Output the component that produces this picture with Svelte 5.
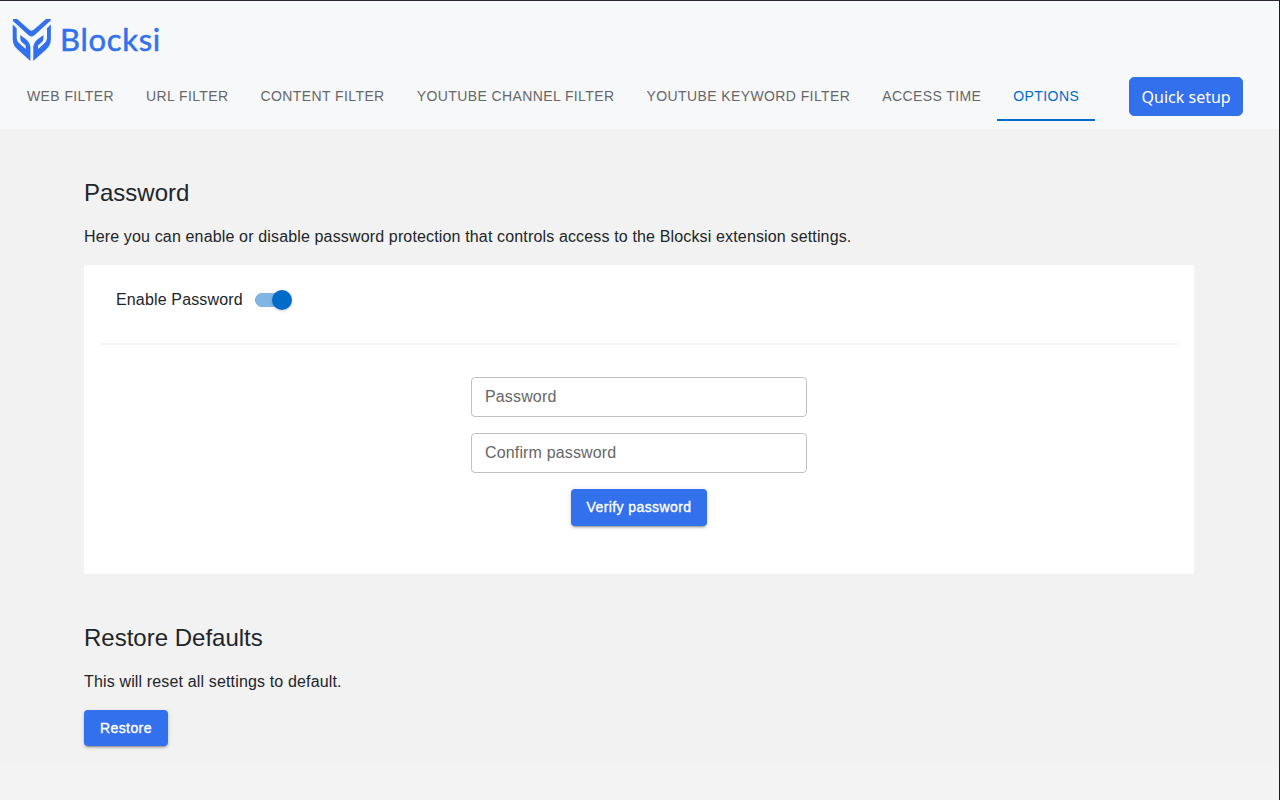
<script>
  const tabs = ['Web filter', 'URL filter', 'Content filter', 'YouTube channel filter', 'YouTube keyword filter', 'Access time', 'Options'];
  let active = $state('Options');
  let enabled = $state(true);
</script>

<div class="page">
  <header>
    <div class="brand">
      <svg class="mark" width="40" height="44" viewBox="0 0 40 44" aria-hidden="true">
        <path d="M0.9 1H5.2L17 11.5Q19.5 13.8 22 11.5L34 1H38.7V2.6L23 16.8Q19.5 20 16 16.8L0.9 3Z" />
        <path d="M0.7 6.5L4.7 10.2V20Q4.8 23 7 25L13.7 31V27.6L10.2 24.6Q8.3 23 8.3 20.5V17L14.3 21.6Q18.4 25 18.4 30V43L5.3 31.3Q0.7 27 0.7 21Z" />
        <path d="M38.9 6.5L35 10.2V20Q34.9 23 32.7 25L26 31V27.6L29.5 24.6Q31.4 23 31.4 20.5V17L25.4 21.6Q21.3 25 21.3 30V43L34.4 31.3Q38.9 27 38.9 21Z" />
      </svg>
      <span class="name">Blocksi</span>
    </div>
    <div class="bar">
      <nav>
        {#each tabs as tab}
          <button class="tab" class:active={tab === active} onclick={() => (active = tab)}>{tab}</button>
        {/each}
      </nav>
      <button class="quick">Quick setup</button>
    </div>
  </header>
  <main>
    <section>
      <h2>Password</h2>
      <p>Here you can enable or disable password protection that controls access to the Blocksi extension settings.</p>
      <div class="card">
        <div class="toggle-row">
          <span>Enable Password</span>
          <button class="switch" class:on={enabled} onclick={() => (enabled = !enabled)} aria-label="Enable Password"><i></i></button>
        </div>
        <hr />
        <form>
          <input type="password" placeholder="Password" />
          <input type="password" placeholder="Confirm password" />
          <button type="button" class="primary verify">Verify password</button>
        </form>
      </div>
    </section>
    <section class="restore">
      <h2>Restore Defaults</h2>
      <p>This will reset all settings to default.</p>
      <button class="primary">Restore</button>
    </section>
  </main>
</div>

<style>
  :global(body) { background: #f3f3f3; }
  .page {
    box-sizing: border-box;
    height: 800px;
    overflow: hidden;
    border-top: 1px solid #2b2630;
    border-right: 1px solid #1c1c1e;
    background: #f3f3f3;
    color: #212529;
    font: 16px/24px "Liberation Sans", Arial, sans-serif;
    letter-spacing: 0.15px;
  }
  button { font-family: inherit; border: 0; cursor: pointer; }
  header { height: 128px; background: #f7f8fa; }
  .brand { display: flex; height: 72px; padding: 17px 0 0 12px; box-sizing: border-box; color: #3370ec; }
  .mark { fill: currentColor; }
  .name { margin-left: 8px; font: 400 31px/43px Lato, sans-serif; letter-spacing: 0.7px; -webkit-text-stroke: 0.5px currentColor; }
  .bar { display: flex; align-items: flex-start; height: 56px; }
  nav { display: flex; padding-left: 11px; }
  .tab {
    height: 48px;
    padding: 0 16px;
    background: none;
    border-bottom: 2px solid transparent;
    color: #666768;
    font-size: 14px;
    letter-spacing: 0.4px;
    text-transform: uppercase;
    white-space: nowrap;
  }
  .tab.active { color: #006bc9; border-color: #006bc9; }
  .quick {
    width: 114px;
    height: 39px;
    margin: 4px 0 0 34px;
    padding: 0;
    border: 1px solid #2f78d8;
    border-radius: 5px;
    background: #3370ec;
    color: #fff;
    font: 16px "Noto Sans", sans-serif;
    white-space: nowrap;
  }
  main { height: 636px; box-sizing: border-box; padding: 48px 85px 0 84px; background: #f2f2f2; }
  h2 { margin: 0; font-size: 24px; line-height: 32px; font-weight: 400; letter-spacing: 0; }
  p { margin: 16px 0; }
  .card { height: 309px; box-sizing: border-box; padding: 19px 16px 0; background: #fff; }
  .toggle-row { display: flex; align-items: center; height: 32px; padding-left: 16px; gap: 12px; }
  .switch {
    width: 37px;
    height: 20px;
    padding: 0;
    background: linear-gradient(#80b5e4, #80b5e4) 7px 3px / 20px 14px no-repeat, radial-gradient(circle at 7px 10px, #80b5e4 6.7px, transparent 7.2px);
    display: flex;
    align-items: center;
  }
  .switch i { width: 20px; height: 20px; flex: none; border-radius: 50%; background: #fff; box-shadow: 0 1px 3px #0003; }
  .switch.on { justify-content: flex-end; }
  .switch.on i { background: #006bc9; }
  hr { margin: 27px 0 32px; border: 0; height: 2px; background: #f6f6f6; }
  form { display: flex; flex-direction: column; align-items: center; gap: 16px; }
  input { box-sizing: border-box; width: 336px; height: 40px; padding: 0 13px; border: 1px solid #c1c1c1; border-radius: 4px; font: inherit; letter-spacing: inherit; }
  input::placeholder { color: #666; opacity: 1; }
  .primary {
    height: 36px;
    padding: 0 16px;
    border-radius: 4px;
    background: #3370ec;
    color: #fff;
    font-size: 14px;
    -webkit-text-stroke: 0.35px #fff;
    letter-spacing: 0.4px;
    box-shadow: 0 3px 1px -2px #0003, 0 2px 2px #0002, 0 1px 5px #0002;
  }
  .verify { height: 37px; width: 136px; padding: 0 0 1px; }
  .restore { margin-top: 48px; }
</style>
